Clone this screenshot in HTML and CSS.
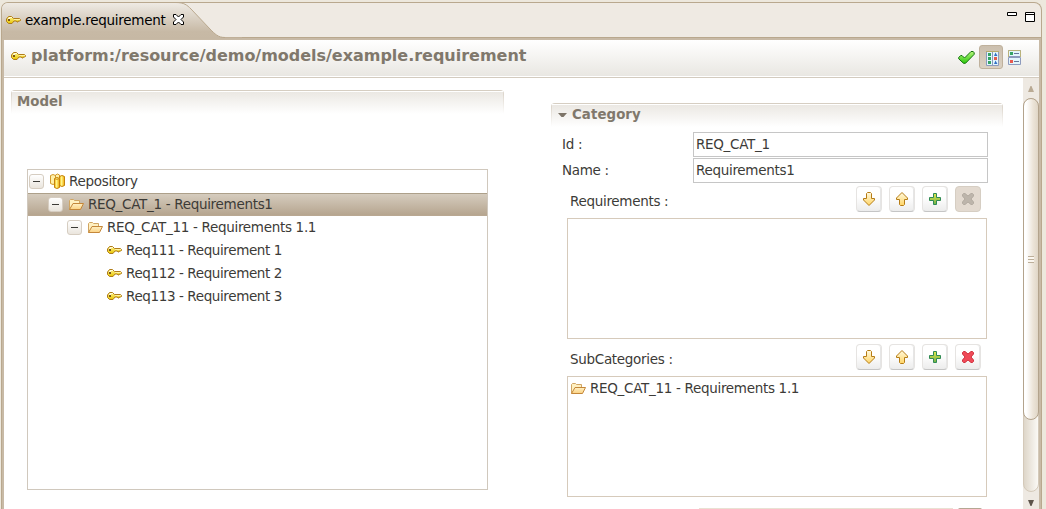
FILE: index.html
```html
<!DOCTYPE html>
<html lang="en">
<head>
<meta charset="utf-8">
<title>example.requirement</title>
<link rel="stylesheet" href="styles.css">
</head>
<body>
<svg class="defs" width="0" height="0" aria-hidden="true">
  <defs>
    <linearGradient id="g-tab" x1="0" y1="0" x2="0" y2="1"><stop offset="0" stop-color="#efebe5"/><stop offset=".8" stop-color="#c7b9a5"/><stop offset="1" stop-color="#c6b8a4"/></linearGradient>
    <linearGradient id="g-gold" x1="0" y1="0" x2="0" y2="1"><stop offset="0" stop-color="#fff9df"/><stop offset="1" stop-color="#ffd566"/></linearGradient>
    <linearGradient id="g-folder" x1="0" y1="0" x2="0" y2="1"><stop offset="0" stop-color="#fff0c4"/><stop offset="1" stop-color="#fbd283"/></linearGradient>
    <linearGradient id="g-plus" x1="0" y1="0" x2="0" y2="1"><stop offset="0" stop-color="#e3e84f"/><stop offset="1" stop-color="#6fb046"/></linearGradient>
    <linearGradient id="g-key" x1="0" y1="0" x2="0" y2="1"><stop offset="0" stop-color="#fff48f"/><stop offset="1" stop-color="#e7c400"/></linearGradient>
    <linearGradient id="g-cyl" x1="0" y1="0" x2="1" y2="0"><stop offset="0" stop-color="#f3b000"/><stop offset=".4" stop-color="#fff58a"/><stop offset="1" stop-color="#f0a800"/></linearGradient>
    <linearGradient id="g-check" x1="0" y1="0" x2="0" y2="1"><stop offset="0" stop-color="#b5f57d"/><stop offset="1" stop-color="#2cc80b"/></linearGradient>
    <symbol id="key" viewBox="0 0 16 16">
      <path d="M2.500 4.500h3l2 2h6l1 1v1l-1 .5h-1l-.5 1h-1l-.7-1h-2.300l-2 2.500h-3.500l-2-2v-2.500z" fill="url(#g-key)" stroke="#b07c1a"/>
      <path d="M8 7.500h6" stroke="#fff2a0"/>
      <path d="M2 6.500h2M3 5.500h3" stroke="#fffbd0"/>
      <path d="M2 7h2v2h-2z" fill="#7b5514"/>
    </symbol>
    <symbol id="folder" viewBox="0 0 16 16">
      <path d="M1.500 13.500v-9l1-1h3l1 1h5v3" fill="#fff0c0" stroke="#d0a563"/>
      <path d="M1.500 13.500l3.500-6h10.500l-3 6z" fill="url(#g-folder)" stroke="#c4873a"/>
    </symbol>
    <symbol id="repo" viewBox="0 0 16 16">
      <path d="M1.500 2.500q2.500-2 5 0v8q-2.500 2-5 0z" fill="#fff0a8" stroke="#d29a2c"/>
      <path d="M6.500 2q2-2 4 0v5h-4z" fill="#fff0a8" stroke="#d29a2c"/>
      <path d="M10.500 3.500q2.500-2 5 0v9q-2.500 2-5 0z" fill="url(#g-cyl)" stroke="#c5820b"/>
      <path d="M5.500 5.500q2.500-2 5 0v9q-2.500 2-5 0z" fill="url(#g-cyl)" stroke="#c5820b"/>
      <path d="M5.500 5.500q2.500 2 5 0" fill="none" stroke="#d29a2c"/>
    </symbol>
    <symbol id="down" viewBox="0 0 14 16"><path d="M5.500 1.500h3l1 1v5h3v1.500l-5.500 5.500-5.500-5.500v-1.500h3v-5z" fill="url(#g-gold)" stroke="#b67c15"/></symbol>
    <symbol id="up" viewBox="0 0 14 16"><path d="M5.500 14.500h3l1-1v-5h3v-1.500l-5.500-5.500-5.500 5.500v1.500h3v5z" fill="url(#g-gold)" stroke="#b67c15"/></symbol>
    <symbol id="plus" viewBox="0 0 14 14"><path d="M5.500 1.500h3v4h4v3h-4v4h-3v-4h-4v-3h4z" fill="url(#g-plus)" stroke="#2f8a55"/></symbol>
    <symbol id="cross" viewBox="0 0 14 14"><path d="M2.500 1.500h1.500l3 2.500 3-2.500h1.500l1 1v1.500l-2.500 3 2.500 3v1.500l-1 1h-1.500l-3-2.500-3 2.500h-1.500l-1-1v-1.500l2.500-3-2.500-3v-1.500z"/></symbol>
  </defs>
</svg>

<div class="editor">
  <header class="tabbar">
    <div class="tab">
      <svg class="tab-shape" width="240" height="37" viewBox="0 0 240 37"><path d="M0 37V6Q0 .5 6 .5H174C182 .5 185 3 189 7L208 27C213 32 216 35.500 223 35.500H240V37z" fill="url(#g-tab)"/><path d="M174 .5C182 .5 185 3 189 7L208 27C213 32 216 35.500 223 35.500" fill="none" stroke="#b9a88e"/></svg>
      <svg class="icon" width="16" height="16"><use href="#key"/></svg>
      <span class="tab-title">example.requirement</span>
      <svg class="close" width="11" height="11" viewBox="0 0 11 11"><path d="M.5.500h2.500l2.500 2.500 2.500-2.500h2.500v2.500l-2.500 2.500 2.500 2.500v2.500h-2.500l-2.500-2.500-2.500 2.500h-2.500v-2.500l2.500-2.500-2.500-2.500z" fill="#fff" stroke="#000"/></svg>
    </div>
    <svg class="winctl" width="28" height="11" viewBox="0 0 28 11"><path d="M.5 .5h9v3h-9zM18.500.500h9v9h-9zM18.500 2.500h9" fill="#fff" stroke="#000"/></svg>
  </header>

  <div class="form">
    <div class="form-head">
      <svg class="icon" width="16" height="16"><use href="#key"/></svg>
      <h1>platform:/resource/demo/models/example.requirement</h1>
      <div class="head-tools">
        <svg width="17" height="15" viewBox="0 0 17 15"><path d="M.7 7.500l2-2h1.300l2.500 2.500 6.500-6.500h2.200l1 1.300v1.500l-8.700 9h-2l-4.800-4.500z" fill="url(#g-check)" stroke="#11720c"/></svg>
        <span class="toggle"><svg width="13" height="15" viewBox="0 0 13 15"><path d="M.5.500h12v14h-12zM6.500 0v15" fill="#e3f6fc" stroke="#8d9bbd"/><path d="M0 .5h13" stroke="#b7aa6c"/><path d="M2 2h3v3H2zM2 6h3v3H2zM2 10h3v3H2z" fill="#35a365"/><path d="M8 5l1.500-3.500L11.500 5zM8 13l1.500-3.500L11.500 13z" fill="#326fc4"/><path d="M8 6h3v3H8z" fill="#e15b50"/></svg></span>
        <svg width="13" height="15" viewBox="0 0 13 15"><path d="M.5.500h12v6h-12zM.5 7.500h12v7h-12z" fill="#e3f6fc" stroke="#8d9bbd"/><path d="M.5 7V.5h12V7" fill="none" stroke="#b9b27a"/><path d="M2 2h3v3H2z" fill="#35a365"/><path d="M2 10h3v3H2z" fill="#e85b50"/><path d="M6 3.500h5M6 11.500h5" stroke="#65779b"/></svg>
      </div>
    </div>

    <div class="form-body">
      <main class="panes">
        <section class="pane model">
          <h2 class="section-title">Model</h2>
          <div class="tree">
            <div class="row lvl0"><i class="expander"></i><svg class="icon" width="16" height="16"><use href="#repo"/></svg><span>Repository</span></div>
            <div class="row lvl1 selected"><i class="expander"></i><svg class="icon" width="16" height="16"><use href="#folder"/></svg><span>REQ_CAT_1 - Requirements1</span></div>
            <div class="row lvl2"><i class="expander"></i><svg class="icon" width="16" height="16"><use href="#folder"/></svg><span>REQ_CAT_11 - Requirements 1.1</span></div>
            <div class="row lvl3"><svg class="icon" width="16" height="16"><use href="#key"/></svg><span>Req111 - Requirement 1</span></div>
            <div class="row lvl3"><svg class="icon" width="16" height="16"><use href="#key"/></svg><span>Req112 - Requirement 2</span></div>
            <div class="row lvl3"><svg class="icon" width="16" height="16"><use href="#key"/></svg><span>Req113 - Requirement 3</span></div>
          </div>
        </section>

        <section class="pane category">
          <h2 class="section-title"><svg class="twistie" width="9" height="5" viewBox="0 0 9 5"><path d="M0 0h9L5.500 4h-2z" fill="#7d7468"/></svg>Category</h2>
          <div class="fields">
            <span>Id :</span><div class="input">REQ_CAT_1</div>
            <span>Name :</span><div class="input">Requirements1</div>
          </div>
          <div class="list-group">
            <div class="list-head">
              <span>Requirements :</span>
              <div class="buttons">
                <span class="btn"><svg width="14" height="16"><use href="#down"/></svg></span>
                <span class="btn"><svg width="14" height="16"><use href="#up"/></svg></span>
                <span class="btn"><svg width="14" height="14"><use href="#plus"/></svg></span>
                <span class="btn disabled"><svg class="x-off" width="14" height="14"><use href="#cross"/></svg></span>
              </div>
            </div>
            <div class="list"></div>
          </div>
          <div class="list-group">
            <div class="list-head">
              <span>SubCategories :</span>
              <div class="buttons">
                <span class="btn"><svg width="14" height="16"><use href="#down"/></svg></span>
                <span class="btn"><svg width="14" height="16"><use href="#up"/></svg></span>
                <span class="btn"><svg width="14" height="14"><use href="#plus"/></svg></span>
                <span class="btn"><svg class="x-on" width="14" height="14"><use href="#cross"/></svg></span>
              </div>
            </div>
            <div class="list"><div class="row"><svg class="icon" width="16" height="16"><use href="#folder"/></svg><span>REQ_CAT_11 - Requirements 1.1</span></div></div>
          </div>
          <div class="next-row"><span class="next-field"></span><span class="next-button"></span></div>
        </section>
      </main>

      <div class="scrollbar">
        <div class="arrow"><svg width="6" height="6" viewBox="0 0 6 6"><path d="M0 6L2.500 0h1L6 6z" fill="#b9aa94"/></svg></div>
        <div class="trough"><div class="thumb"><i class="grip"></i></div></div>
        <div class="arrow bottom"><svg width="6" height="6" viewBox="0 0 6 6"><path d="M0 0h6L3.500 6h-1z" fill="#5d554b"/></svg></div>
      </div>
    </div>
  </div>
</div>
</body>
</html>
```
FILE: styles.css
```css
* { box-sizing: border-box; }
body {
  margin: 0;
  height: 509px;
  overflow: hidden;
  padding: 2px 4px 0 1px;
  background: #ede8dd;
  color: #3c3b37;
  font: 13.5px/16px "DejaVu Sans", sans-serif;
  letter-spacing: -0.31px;
}
svg { display: block; flex: none; }
.defs { position: absolute; }
h1, h2 { margin: 0; letter-spacing: 0; }

.editor {
  height: 507px;
  border: 1px solid #b9a88e;
  border-bottom: 0;
  border-radius: 7px 8px 0 0;
  background: #c8baa6;
  overflow: hidden;
}
.tabbar {
  height: 37px;
  display: flex;
  justify-content: space-between;
  background: linear-gradient(#efeae3 34px, #b9a88e 34px, #b9a88e 35px, #c8baa6 35px);
}
.tab {
  position: relative;
  display: flex;
  align-items: center;
  height: 34px;
  padding-left: 4px;
  color: #000;
}
.tab-shape { position: absolute; left: 0; top: -1px; }
.tab > .icon, .tab-title, .close { position: relative; }
.tab-title { margin-left: 3px; letter-spacing: -0.27px; }
.close { margin: 0 0 1px 7px; }
.winctl { margin: 9px 6px 0 0; }

.form {
  height: 469px;
  margin: 0 2px;
  background: #fff;
}
.form-head {
  height: 38px;
  padding: 0 18px 6px 7px;
  display: flex;
  align-items: center;
  background: linear-gradient(#fff 0, #e9e7e2 36px, #fff 36px, #fff 37px, #d3cbbf 37px);
}
.form-head h1 {
  margin: 0 0 1px 4px;
  color: #80786c;
  font-size: 16px;
  line-height: 20px;
  letter-spacing: -0.02px;
}
.head-tools {
  margin-left: auto;
  padding-top: 2px;
  display: flex;
  align-items: center;
  gap: 4px;
}
.toggle {
  width: 24px;
  height: 24px;
  border: 1px solid #bfb19c;
  border-radius: 3px;
  background: linear-gradient(#cbbfae, #dbd1c2);
  display: grid;
  place-items: center;
  padding: 2px 0 0 2px;
}
.head-tools > .toggle + svg { margin-left: 1px; }

.form-body { display: flex; height: 431px; }
.panes {
  flex: 1;
  display: flex;
  padding-left: 7px;
}
.section-title {
  height: 24px;
  padding: 3px 6px;
  display: flex;
  color: #80786c;
  font-size: 13.33px;
  line-height: 17px;
  border-radius: 4px 4px 0 0;
  background:
    linear-gradient(#d6cec2, #fff) left / 1px 100% no-repeat,
    linear-gradient(#d6cec2, #fff) right / 1px 100% no-repeat,
    linear-gradient(#d6cec2, #d6cec2) top / 100% 1px no-repeat,
    linear-gradient(#fff 2px, #ebe8e3 2px, #fff);
}
.category .section-title { letter-spacing: 0.08px; }
.model { width: 493px; padding-top: 12px; }
.tree {
  width: 461px;
  height: 321px;
  margin: 55px 0 0 16px;
  border: 1px solid #d0c8bd;
}
.row {
  height: 23px;
  display: flex;
  align-items: center;
}
.row > .icon { margin-bottom: 1px; }
.row > span { margin: 0 0 1px 4px; white-space: nowrap; }
.lvl0 { padding-left: 1px; }
.lvl1 { padding-left: 20px; }
.lvl2 { padding-left: 39px; }
.lvl3 { padding-left: 79px; }
.tree .row.lvl3 > span { margin-left: 3px; letter-spacing: -0.39px; }
.selected {
  border-top: 1px solid #ada08a;
  border-bottom: 1px solid #b9a892;
  background: linear-gradient(#d5ccbe, #b6a58f);
}
.expander {
  width: 15px;
  height: 15px;
  margin-right: 5px;
  border: 1px solid #d6cdc1;
  border-radius: 3px;
  background: linear-gradient(#3c3b37, #3c3b37) center / 7px 1px no-repeat, linear-gradient(#fff, #eae5dd);
}

.category { width: 452px; margin-left: 47px; padding-top: 25px; }
.twistie { margin: 7px 5px 0 1px; }
.fields {
  display: grid;
  grid-template-columns: 131px 295px;
  gap: 1px 0;
  padding: 5px 0 0 11px;
  align-items: center;
}
.fields > span { padding-bottom: 2px; }
.input {
  height: 25px;
  padding: 0 2px;
  border: 1px solid #c6c6c6;
  line-height: 23px;
}
.list-group { width: 420px; margin-left: 16px; }
.list-head {
  height: 35px;
  padding: 3px 6px 0 3px;
  display: flex;
  justify-content: space-between;
}
.list-head > span { padding-top: 7px; }
.buttons { display: flex; gap: 7px; }
.btn {
  width: 26px;
  height: 26px;
  border: 1px solid #e6e4e2;
  border-bottom-color: #c5c5c5;
  border-radius: 4px;
  background: linear-gradient(#fff 40%, #ececec);
  box-shadow: inset -1px 0 #e6e6e6;
  display: grid;
  place-items: center;
}
.disabled { border-color: #d6cec3; background: #e3dad0; box-shadow: none; }
.x-off { fill: #bdb5ab; stroke: #b3aba1; }
.x-on { fill: #f04a58; stroke: #cf3340; }
.list { height: 121px; border: 1px solid #d6cabb; }
.list-group + .list-group .list-head { height: 37px; }
.list-group + .list-group .list-head { padding-top: 5px; }
.list .row { padding-left: 2px; }
.next-row {
  display: flex;
  justify-content: space-between;
  margin: 11px 21px 0 148px;
}
.next-field { width: 254px; height: 1px; background: #e9e1d3; }
.next-button { width: 24px; height: 2px; border-radius: 2px 2px 0 0; background: #b5a793; }

.scrollbar {
  width: 16px;
  background: #eee9e2;
  display: flex;
  flex-direction: column;
}
.arrow { height: 20px; padding: 8px 0 0 5px; }
.trough {
  height: 394px;
  border: 1px solid #d4c9b9;
  border-radius: 8px;
  background: linear-gradient(90deg, #ded6c9, #fbf9f5);
}
.thumb {
  height: 322px;
  margin: -1px;
  border: 1px solid #b3a38c;
  border-radius: 8px;
  background: linear-gradient(90deg, #fff 15%, #ece4d8 65%, #e0d6c6);
  display: grid;
  place-items: center;
}
.grip {
  width: 6px;
  height: 7px;
  background: repeating-linear-gradient(#bcae99 0 1px, #fbf7f0 1px 3px);
}
.arrow.bottom { height: 17px; }
```
